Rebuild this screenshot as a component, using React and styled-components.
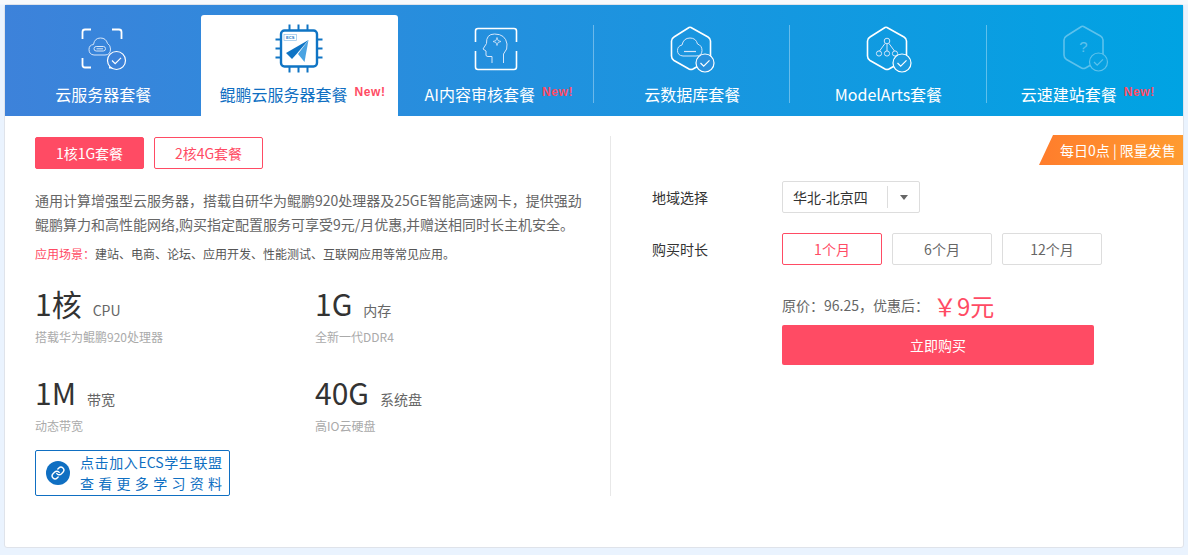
import styled, { createGlobalStyle } from 'styled-components';
import { Link } from 'lucide-react';

const GlobalStyle = createGlobalStyle`
  html, body {
    margin: 0;
    padding: 0;
    background: #eaf3fe;
    font-family: "Noto Sans CJK SC", "Noto Sans", sans-serif;
  }
`;

const red = '#ff4b64';

const Page = styled.div`
  height: 555px;
  box-sizing: border-box;
  padding: 4px 4px 0;
  background: linear-gradient(#f7f9fc 0, #f7f9fc 4px, #eaf3fe 5px);
`;

const Card = styled.div`
  position: relative;
  width: 1180px;
  height: 544px;
  box-sizing: border-box;
  background: #fff;
  border: 1px solid #dfe3ea;
  border-radius: 3px;
`;

const Nav = styled.div`
  display: flex;
  height: 111px;
  box-sizing: border-box;
  padding-top: 10px;
  background: linear-gradient(90deg, #3d82da 0%, #00a3e3 100%);
`;

const Tab = styled.div`
  position: relative;
  flex: 1;
  display: flex;
  flex-direction: column;
  align-items: center;
  padding-top: 3px;
  color: ${(p) => (p.$active ? '#0f6fc2' : '#fff')};
  background: ${(p) => (p.$active ? '#fff' : 'transparent')};
  border-radius: ${(p) => (p.$active ? '3px 3px 0 0' : '0')};

  &::after {
    content: '';
    display: ${(p) => (p.$divider ? 'block' : 'none')};
    position: absolute;
    right: 0;
    top: 10px;
    bottom: 13px;
    width: 1px;
    background: rgba(255, 255, 255, 0.35);
  }
`;

const TabIcon = styled.svg`
  display: block;
  width: 60px;
  height: 60px;
  opacity: ${(p) => (p.$dim ? 0.35 : 1)};
`;

const TabLabel = styled.div`
  display: flex;
  align-items: flex-start;
  gap: 7px;
  margin-top: 4px;
  padding-left: ${(p) => (p.$fresh ? '6px' : '0')};
  font-size: 16px;
  line-height: 24px;
  white-space: nowrap;
`;

const NewMark = styled.span`
  font-family: "Liberation Sans", sans-serif;
  font-size: 12px;
  font-weight: 700;
  line-height: 20px;
  letter-spacing: 0.6px;
  color: ${red};
`;

const Body = styled.div`
  display: flex;
  padding-top: 20px;
`;

const LeftPanel = styled.div`
  width: 606px;
  height: 360px;
  box-sizing: border-box;
  padding: 1px 24px 0 30px;
  border-right: 1px solid #e8e8e8;
`;

const ChoiceRow = styled.div`
  display: flex;
  gap: 10px;
`;

const Choice = styled.div`
  width: 109px;
  height: 32px;
  box-sizing: border-box;
  border: 1px solid ${red};
  border-radius: 2px;
  font-size: 14px;
  line-height: 30px;
  text-align: center;
  color: ${(p) => (p.$active ? '#fff' : red)};
  background: ${(p) => (p.$active ? red : '#fff')};
`;

const Intro = styled.p`
  margin: 19px 0 0;
  font-size: 14px;
  line-height: 24px;
  color: #666;
`;

const Scene = styled.p`
  margin: 9px 0 0;
  font-size: 12px;
  line-height: 18px;
  color: #555;

  & > span {
    color: ${red};
  }
`;

const Specs = styled.div`
  display: grid;
  grid-template-columns: 280px 1fr;
  margin-top: 20px;
  row-gap: 26px;
`;

const SpecValue = styled.div`
  display: flex;
  align-items: baseline;
  gap: 11px;
  height: 40px;
  font-size: 30px;
  line-height: 40px;
  color: #333;

  & > small {
    font-size: 14px;
    color: #666;
  }
`;

const SpecNote = styled.div`
  margin-top: 5px;
  font-size: 12px;
  line-height: 18px;
  color: #aaa;
`;

const LinkBox = styled.div`
  display: flex;
  align-items: center;
  gap: 10px;
  width: 195px;
  height: 46px;
  box-sizing: border-box;
  margin-top: 15px;
  padding: 0 7px 0 10px;
  border: 1px solid #0f6fc2;
  border-radius: 2px;
  color: #0f6fc2;
`;

const LinkDot = styled.div`
  flex: none;
  display: flex;
  align-items: center;
  justify-content: center;
  width: 24px;
  height: 24px;
  border-radius: 50%;
  background: #0f6fc2;
  color: #fff;
`;

const LinkText = styled.div`
  flex: 1;
  font-size: 14px;
  line-height: 21px;

  & > div {
    text-align: justify;
    text-align-last: justify;
  }
`;

const RightPanel = styled.div`
  flex: 1;
  padding: 45px 0 0 41px;
`;

const Row = styled.div`
  display: flex;
  align-items: center;
  margin-bottom: 20px;
`;

const Label = styled.div`
  width: 130px;
  font-size: 14px;
  color: #333;
`;

const Select = styled.div`
  display: flex;
  align-items: center;
  width: 138px;
  height: 32px;
  box-sizing: border-box;
  padding-left: 10px;
  border: 1px solid #ddd;
  border-radius: 2px;
  font-size: 14px;
  color: #333;
`;

const SelectText = styled.div`
  width: 94px;
  height: 22px;
  line-height: 22px;
  border-right: 1px solid #ddd;
`;

const Caret = styled.div`
  width: 0;
  height: 0;
  margin-left: 12px;
  border-left: 4px solid transparent;
  border-right: 4px solid transparent;
  border-top: 5px solid #666;
`;

const Durations = styled.div`
  display: flex;
  gap: 10px;
`;

const Duration = styled.div`
  width: 100px;
  height: 32px;
  box-sizing: border-box;
  border: 1px solid ${(p) => (p.$active ? red : '#ddd')};
  border-radius: 2px;
  font-size: 14px;
  line-height: 30px;
  text-align: center;
  color: ${(p) => (p.$active ? red : '#666')};
`;

const Price = styled.div`
  display: flex;
  align-items: center;
  height: 40px;
  margin: 0 0 0 130px;
  font-size: 14px;
  color: #666;

  & > strong {
    margin-left: 4px;
    font-size: 24px;
    font-weight: 400;
    color: ${red};
  }
`;

const BuyButton = styled.div`
  width: 312px;
  height: 40px;
  margin: 0 0 0 130px;
  border-radius: 2px;
  background: ${red};
  font-size: 14px;
  line-height: 40px;
  text-align: center;
  color: #fff;
`;

const Ribbon = styled.div`
  position: absolute;
  right: 0;
  top: 130px;
  width: 144px;
  height: 30px;
  box-sizing: border-box;
  padding-left: 21px;
  clip-path: polygon(14px 0, 100% 0, 100% 100%, 0 100%);
  background: linear-gradient(90deg, #ff7d2c, #ff9b30);
  font-size: 14px;
  line-height: 30px;
  color: #fff;
  white-space: nowrap;
`;

const Badge = ({ cx, cy, fill }) => (
  <g>
    <circle cx={cx} cy={cy} r="9" fill={fill} stroke="#fff" strokeWidth="1.2" />
    <path d={`M${cx - 4.5} ${cy} l3.2 3.2 l5.8 -5.8`} fill="none" stroke="#fff" strokeWidth="1.2" />
  </g>
);

const hexagon = 'M29 9.5 L46 19 Q48.5 20.5 48.5 23 L48.5 38 Q48.5 41 46 42.5 L31 51 Q29 52 27 51 L12 42.5 Q9.5 41 9.5 38 L9.5 23 Q9.5 20.5 12 19 L27 9.5 Q28 9 29 9.5 Z';

const ServerIcon = () => (
  <TabIcon viewBox="0 0 60 60" fill="none">
    <path
      d="M9.5 21 V14 Q9.5 11.5 12 11.5 H18 M39 11.5 H46 Q48.5 11.5 48.5 14 V21 M9.5 40 V47 Q9.5 49.5 12 49.5 H18 M39 49.5 H36"
      stroke="#fff"
      strokeWidth="1.8"
    />
    <path
      d="M21 37 Q16 36.5 16 31.5 Q16 27 20.5 26.5 Q21.5 20 27.5 20 Q33 20 34.5 25.5 Q37.5 27 37.5 31 Q37.5 37 32 37 Z"
      stroke="#d6e6fa"
      strokeWidth="1"
    />
    <rect x="21" y="28.5" width="11.5" height="4.5" rx="2.2" stroke="#d6e6fa" strokeWidth="1" />
    <path d="M23.5 30.8 H30" stroke="#d6e6fa" strokeWidth="1" />
    <Badge cx={43.5} cy={42.5} fill="#3c83da" />
  </TabIcon>
);

const ChipIcon = () => (
  <TabIcon viewBox="0 0 60 60" fill="none">
    <rect x="12" y="12.5" width="36" height="36" rx="3.5" stroke="#0f74c4" strokeWidth="2.4" />
    <path
      d="M20.5 6.5 V12 M29.5 6.5 V12 M38.5 6.5 V12 M20.5 49 V54.5 M29.5 49 V54.5 M38.5 49 V54.5 M6.5 21.5 H12 M6.5 30.5 H12 M6.5 39.5 H12 M48 21.5 H53.5 M48 30.5 H53.5 M48 39.5 H53.5"
      stroke="#0f74c4"
      strokeWidth="2"
    />
    <rect x="15" y="16.5" width="12.5" height="6" stroke="#8fc0e8" strokeWidth="0.7" />
    <text x="21.2" y="21.2" fontSize="4" fontWeight="700" textAnchor="middle" fill="#0f74c4" fontFamily="Liberation Sans">ECS</text>
    <path d="M39.5 22 L17 35 L23 41 L28 35.5 Z" fill="#0f74c4" />
    <path d="M39.5 22 L29 36 L35.5 44 Z" fill="#4aa3e2" />
  </TabIcon>
);

const HeadIcon = () => (
  <TabIcon viewBox="0 0 60 60" fill="none">
    <path
      d="M9.5 24 V13 Q9.5 10.5 12 10.5 H48 Q50.5 10.5 50.5 13 V24 M9.5 33 V49 Q9.5 51.5 12 51.5 H48 Q50.5 51.5 50.5 49 V33"
      stroke="#fff"
      strokeWidth="1.6"
    />
    <path
      d="M37.5 45 V36 Q42 31 41 26 Q39.5 16 28.5 16 Q20 16 20.5 25.5 L17 31 L20 33 V37 Q20 38.5 22 38.5 H26 V45"
      stroke="#d6e6fa"
      strokeWidth="1"
    />
    <path d="M31 19.5 L32 22.5 L35 23.5 L32 24.5 L31 27.5 L30 24.5 L27 23.5 L30 22.5 Z" stroke="#d6e6fa" strokeWidth="0.8" />
  </TabIcon>
);

const DataIcon = () => (
  <TabIcon viewBox="0 0 60 60" fill="none">
    <path d={hexagon} stroke="#fff" strokeWidth="1.6" />
    <path
      d="M21 38 Q15.5 37.5 15.5 32.5 Q15.5 28 20 27 Q21.5 20 28 20 Q34 20 35.5 26 Q40 27.5 40 32.5 Q40 38 34 38 Z"
      stroke="#d6e6fa"
      strokeWidth="1"
    />
    <path d="M22 33.5 H34" stroke="#d6e6fa" strokeWidth="1.2" />
    <Badge cx={43} cy={45} fill="#2a91dd" />
  </TabIcon>
);

const ModelIcon = () => (
  <TabIcon viewBox="0 0 60 60" fill="none">
    <path d={hexagon} stroke="#fff" strokeWidth="1.6" />
    <g stroke="#d6e6fa" strokeWidth="1">
      <circle cx="29" cy="23" r="2.8" />
      <circle cx="21" cy="35.5" r="2.6" />
      <circle cx="29" cy="35.5" r="2.6" />
      <circle cx="37" cy="35.5" r="2.6" />
      <path d="M29 26 V33 M27 25.5 L21.5 33 M31 25.5 L36.5 33" />
    </g>
    <Badge cx={44} cy={45} fill="#1b9adf" />
  </TabIcon>
);

const SiteIcon = () => (
  <TabIcon viewBox="0 0 60 60" fill="none" $dim>
    <g transform="translate(-0.5 -1)">
      <path d={hexagon} stroke="#fff" strokeWidth="1.6" />
      <text x="29" y="35" fontSize="15" textAnchor="middle" fill="#fff" fontFamily="Liberation Sans">?</text>
      <Badge cx={44} cy={45} fill="#0ea2e1" />
    </g>
  </TabIcon>
);

const tabs = [
  { name: '云服务器套餐', icon: <ServerIcon /> },
  { name: '鲲鹏云服务器套餐', icon: <ChipIcon />, fresh: true, active: true },
  { name: 'AI内容审核套餐', icon: <HeadIcon />, fresh: true, divider: true },
  { name: '云数据库套餐', icon: <DataIcon />, divider: true },
  { name: 'ModelArts套餐', icon: <ModelIcon />, divider: true },
  { name: '云速建站套餐', icon: <SiteIcon />, fresh: true },
];

const specs = [
  { value: '1核', unit: 'CPU', note: '搭载华为鲲鹏920处理器' },
  { value: '1G', unit: '内存', note: '全新一代DDR4' },
  { value: '1M', unit: '带宽', note: '动态带宽' },
  { value: '40G', unit: '系统盘', note: '高IO云硬盘' },
];

export default function App() {
  return (
    <Page>
      <GlobalStyle />
      <Card>
        <Nav>
          {tabs.map((tab) => (
            <Tab key={tab.name} $active={tab.active} $divider={tab.divider}>
              {tab.icon}
              <TabLabel $fresh={tab.fresh}>
                {tab.name}
                {tab.fresh && <NewMark>New!</NewMark>}
              </TabLabel>
            </Tab>
          ))}
        </Nav>
        <Body>
          <LeftPanel>
            <ChoiceRow>
              <Choice $active>1核1G套餐</Choice>
              <Choice>2核4G套餐</Choice>
            </ChoiceRow>
            <Intro>
              通用计算增强型云服务器，搭载自研华为鲲鹏920处理器及25GE智能高速网卡，提供强劲鲲鹏算力和高性能网络,购买指定配置服务可享受9元/月优惠,并赠送相同时长主机安全。
            </Intro>
            <Scene>
              <span>应用场景：</span>建站、电商、论坛、应用开发、性能测试、互联网应用等常见应用。
            </Scene>
            <Specs>
              {specs.map((spec) => (
                <div key={spec.value}>
                  <SpecValue>
                    {spec.value}
                    <small>{spec.unit}</small>
                  </SpecValue>
                  <SpecNote>{spec.note}</SpecNote>
                </div>
              ))}
            </Specs>
            <LinkBox>
              <LinkDot>
                <Link size={14} strokeWidth={2.4} />
              </LinkDot>
              <LinkText>
                <div>点击加入ECS学生联盟</div>
                <div>查看更多学习资料</div>
              </LinkText>
            </LinkBox>
          </LeftPanel>
          <RightPanel>
            <Row>
              <Label>地域选择</Label>
              <Select>
                <SelectText>华北-北京四</SelectText>
                <Caret />
              </Select>
            </Row>
            <Row>
              <Label>购买时长</Label>
              <Durations>
                <Duration $active>1个月</Duration>
                <Duration>6个月</Duration>
                <Duration>12个月</Duration>
              </Durations>
            </Row>
            <Price>
              原价：96.25，优惠后：<strong>￥9元</strong>
            </Price>
            <BuyButton>立即购买</BuyButton>
          </RightPanel>
        </Body>
        <Ribbon>每日0点 | 限量发售</Ribbon>
      </Card>
    </Page>
  );
}
